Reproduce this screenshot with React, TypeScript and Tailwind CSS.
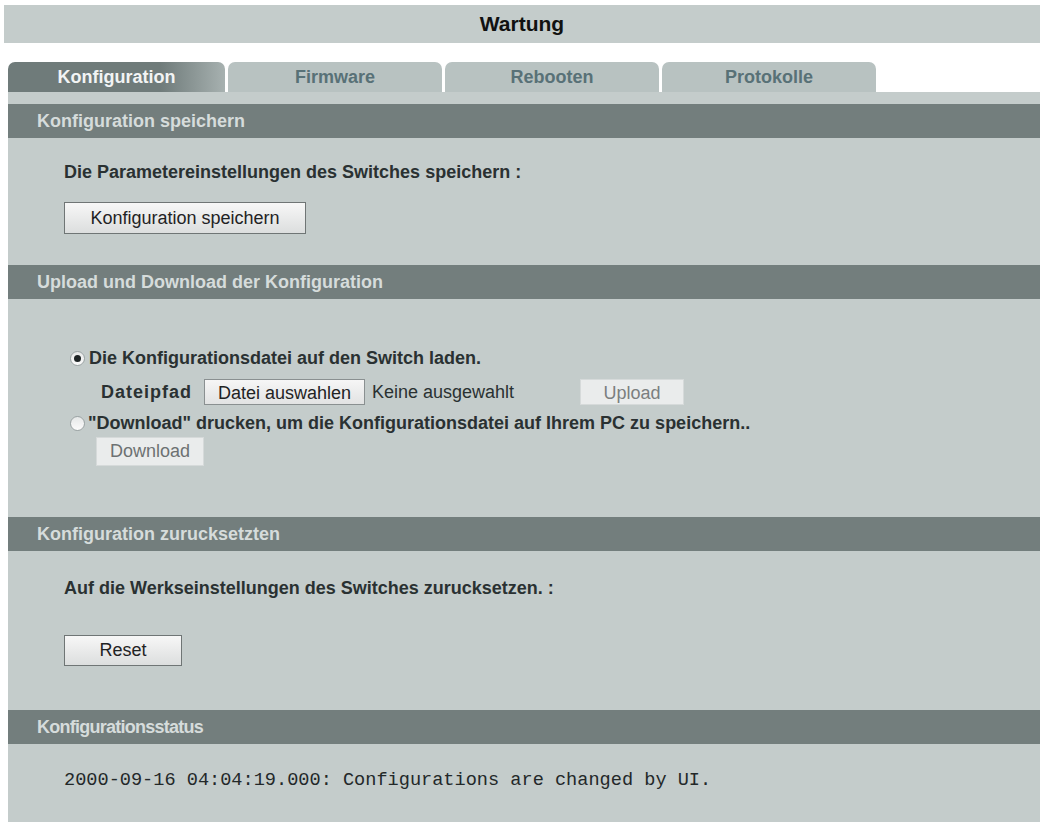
import React from 'react'

// Wartung page of the switch web UI: tab strip plus four configuration sections

const tabs = ['Konfiguration', 'Firmware', 'Rebooten', 'Protokolle']

function SectionHeader({ title, className = '' }: { title: string; className?: string }) {
  return (
    <div className="h-[34px] bg-[#737e7d] flex items-center pl-[29px]">
      <span className={`text-[18px] font-bold text-[#d6dcdb] ${className}`}>{title}</span>
    </div>
  )
}

function Radio({ checked }: { checked: boolean }) {
  return (
    <span className="w-[15px] h-[15px] rounded-full border border-[#9aa2a3] bg-gradient-to-b from-[#e6e8e8] to-[#fbfbfb] flex items-center justify-center shrink-0">
      {checked && <span className="w-[7px] h-[7px] rounded-full bg-[#1e2425]" />}
    </span>
  )
}

export default function App() {
  return (
    <div
      className="w-[1043px] h-[826px] bg-white pt-[5px] text-[#2a3132]"
      style={{ fontFamily: '"Liberation Sans", Arial, sans-serif' }}
    >
      {/* Page title */}
      <div className="ml-[4px] w-[1036px] h-[38px] bg-[#c4cccb] flex items-center justify-center">
        <h1 className="text-[21px] font-bold text-[#111]">Wartung</h1>
      </div>

      {/* Tabs */}
      <div className="ml-[8px] mt-[19px] flex gap-[3px] h-[30px]">
        {tabs.map((t, i) => (
          <div
            key={t}
            className={
              i === 0
                ? 'w-[217px] rounded-t-[7px] flex items-center justify-center text-[18px] font-bold text-[#f2f4f4] bg-gradient-to-r from-[#6f7b7a] from-70% to-[#a7b1b0]'
                : 'w-[214px] rounded-t-[7px] flex items-center justify-center text-[18px] font-bold text-[#587177] bg-[#b8c2c1]'
            }
          >
            {t}
          </div>
        ))}
      </div>

      {/* Panel */}
      <div className="ml-[8px] w-[1032px] h-[730px] bg-[#c4cccb] pt-[12px]">
        <SectionHeader title="Konfiguration speichern" />
        <div className="pl-[56px] pt-[22px] pb-[31px]">
          <p className="text-[18px] font-bold leading-[24px]">Die Parametereinstellungen des Switches speichern :</p>
          <button className="mt-[18px] h-[32px] w-[242px] border border-[#6f7575] bg-gradient-to-b from-[#f7f7f7] to-[#dcdede] text-[18px] text-[#1f2324]">
            Konfiguration speichern
          </button>
        </div>

        <SectionHeader title="Upload und Download der Konfiguration" />
        <div className="pl-[62px] pt-[47px] pb-[51px]">
          <div className="flex items-center gap-[4px] h-[24px]">
            <Radio checked />
            <span className="text-[18px] font-bold">Die Konfigurationsdatei auf den Switch laden.</span>
          </div>
          <div className="mt-[9px] ml-[31px] flex items-center h-[26px] text-[18px]">
            <span className="font-bold w-[103px] tracking-[1px]">Dateipfad</span>
            <button className="h-[26px] w-[161px] border border-[#8a9091] bg-gradient-to-b from-[#f6f6f6] to-[#e2e3e3] text-[#1f2324]">
              Datei auswahlen
            </button>
            <span className="ml-[7px] w-[208px]">Keine ausgewahlt</span>
            <button className="h-[26px] w-[104px] border border-[#d6dada] bg-[#eaecec] text-[#7b7f80]">
              Upload
            </button>
          </div>
          <div className="mt-[6px] flex items-center gap-[3px] h-[24px]">
            <Radio checked={false} />
            <span className="text-[18px] font-bold">"Download" drucken, um die Konfigurationsdatei auf Ihrem PC zu speichern..</span>
          </div>
          <button className="mt-[2px] ml-[26px] h-[29px] w-[108px] border border-[#d6dada] bg-[#eaecec] text-[18px] text-[#6d7172]">
            Download
          </button>
        </div>

        <SectionHeader title="Konfiguration zurucksetzten" />
        <div className="pl-[56px] pt-[25px] pb-[44px]">
          <p className="text-[18px] font-bold leading-[24px]">Auf die Werkseinstellungen des Switches zurucksetzen. :</p>
          <button className="mt-[35px] h-[31px] w-[118px] border border-[#6f7575] bg-gradient-to-b from-[#f7f7f7] to-[#dcdede] text-[18px] text-[#1f2324]">
            Reset
          </button>
        </div>

        <SectionHeader title="Konfigurationsstatus" className="tracking-[-0.75px]" />
        <div className="pl-[56px] pt-[26px]">
          <p
            className="text-[18.6px] leading-[22px] text-[#232829]"
            style={{ fontFamily: '"Liberation Mono", "Courier New", monospace' }}
          >
            2000-09-16 04:04:19.000: Configurations are changed by UI.
          </p>
        </div>
      </div>
    </div>
  )
}
